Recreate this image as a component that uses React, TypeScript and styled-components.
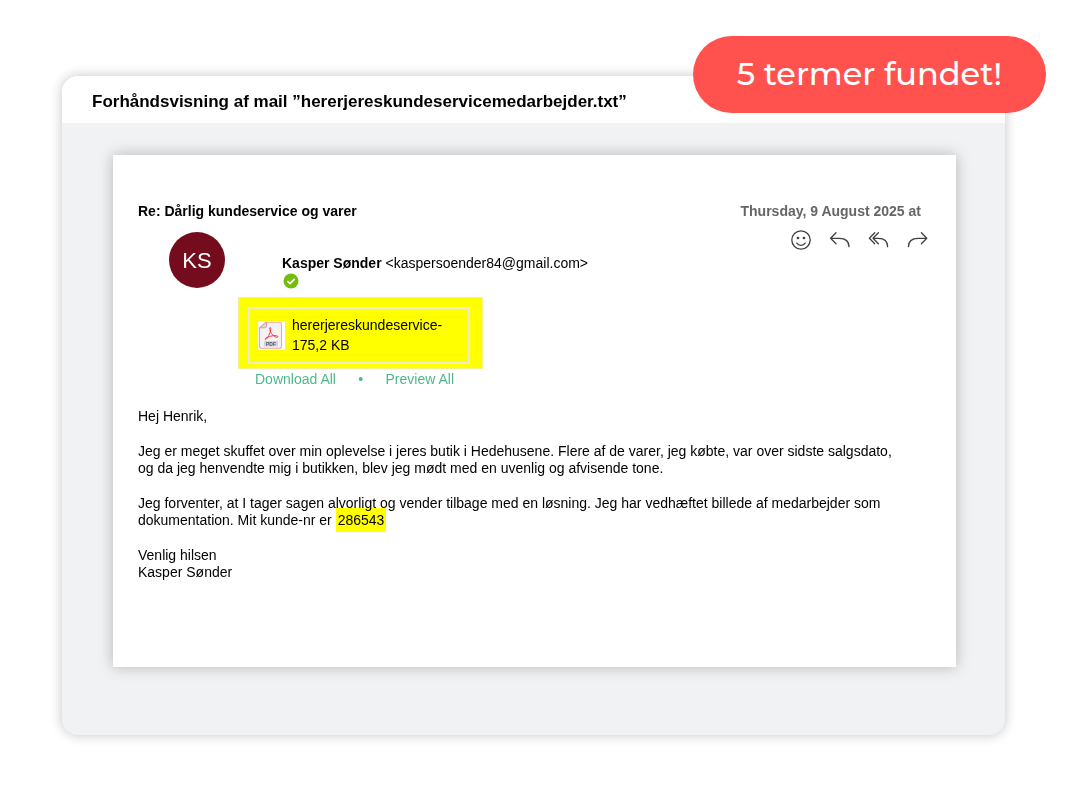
import React from "react";
import styled, { createGlobalStyle } from "styled-components";

const GlobalStyle = createGlobalStyle`
  *, *::before, *::after { box-sizing: border-box; }
  body {
    margin: 0;
    background: #ffffff;
    color: #000000;
    font-family: "Liberation Sans", Arial, sans-serif;
    font-size: 14px;
    line-height: 17px;
  }
`;

const Page = styled.main`
  position: relative;
  padding: 76px 62px 64px;
`;

const FoundBadge = styled.div`
  position: absolute;
  top: 36px;
  right: 21px;
  padding: 15px 44px 17px;
  border-radius: 40px;
  background: #ff524f;
  color: #ffffff;
  font-family: Montserrat, Inter, sans-serif;
  font-size: 32px;
  font-weight: 500;
  line-height: 45px;
  white-space: nowrap;
`;

const Panel = styled.section`
  border-radius: 16px;
  background: #f1f2f4;
  box-shadow: 0 0 12px 1px rgba(0, 0, 0, 0.2);
`;

const PanelTitle = styled.h1`
  margin: 0;
  padding: 16px 30px 11px;
  border-radius: 16px 16px 0 0;
  background: #ffffff;
  font-size: 17px;
  line-height: 20px;
`;

const PanelBody = styled.div`
  padding: 32px 49px 68px 51px;
`;

const Mail = styled.article`
  padding: 48px 28px 86px 25px;
  background: #ffffff;
  box-shadow: 0 0 14px rgba(0, 0, 0, 0.25);
`;

const MailHeader = styled.header`
  display: flex;
  justify-content: space-between;
`;

const Subject = styled.h2`
  margin: 0;
  font-size: 14px;
  line-height: 17px;
`;

const Sender = styled.div`
  display: flex;
  gap: 57px;
  padding: 12px 0 0 31px;
`;

const Avatar = styled.div`
  display: grid;
  place-items: center;
  width: 56px;
  height: 56px;
  border-radius: 50%;
  background: #750c1e;
  color: #ffffff;
  font-size: 22px;
`;

const SenderName = styled.div`
  padding-top: 23px;

  svg {
    display: block;
    margin: 1px 0 0 1px;
  }
`;

const Meta = styled.div`
  display: flex;
  flex-direction: column;
  align-items: flex-end;
  gap: 10px;
`;

const SentDate = styled.time`
  padding-right: 7px;
  color: #666666;
  font-weight: bold;
`;

const Actions = styled.div`
  display: flex;
  gap: 19px;
`;

const ActionButton = styled.button`
  width: 20px;
  height: 20px;
  padding: 0;
  border: 0;
  background: none;
  color: #404040;
  cursor: pointer;

  svg {
    display: block;
    overflow: visible;
  }
`;

const Attachments = styled.section`
  width: fit-content;
  margin: 8px 0 0 100px;
`;

const Highlight = styled.div`
  padding: 9px 12px 4px 9px;
  background: #ffff00;
  border: 1px solid #f4f08c;
`;

const Attachment = styled.div`
  display: flex;
  align-items: center;
  gap: 7px;
  min-width: 222px;
  padding: 6px 20px 7px 8px;
  border: 2px solid #ecebd0;
  line-height: 20px;
`;

const AttachmentLinks = styled.nav`
  display: flex;
  justify-content: space-between;
  padding: 2px 29px 0 17px;
  color: #4fb78e;
`;

const TextLink = styled.a`
  color: inherit;
  text-decoration: none;
`;

const Message = styled.div`
  display: grid;
  gap: 18px;
  padding-top: 20px;

  p { margin: 0; }
`;

/* Multiplied so that descenders from the line above stay readable. */
const Mark = styled.mark`
  padding: 4px 2px;
  background: #ffff00;
  color: inherit;
  mix-blend-mode: multiply;
`;

const VerifiedIcon = () => (
  <svg width="16" height="16" viewBox="0 0 16 16" aria-hidden="true">
    <circle cx="8" cy="8" r="7.5" fill="#72bd0c" />
    <path d="M4.4 8.2 7 10.6l4.7-4.7" fill="none" stroke="#fff" strokeWidth="1.8" />
  </svg>
);

const PdfIcon = () => (
  <svg width="27" height="29" viewBox="0 0 27 29" aria-hidden="true">
    <path d="M0 0h27v29H0z" fill="#fff" />
    <path
      d="M8 1.2h13.5a2 2 0 0 1 2 2v22a2 2 0 0 1-2 2h-18a2 2 0 0 1-2-2V7z"
      fill="#f3f3f6"
      stroke="#f7a3a3"
      strokeWidth="1.1"
    />
    <path d="M8.5 1v4a1.8 1.8 0 0 1-1.8 1.8H1.6z" fill="#ddd" stroke="#d08a8a" strokeWidth=".8" />
    <path
      d="M12.4 6.4c-1.3 0-.4 3.8 1.2 6.2 1.5 2.3 4.4 4.3 6 3.6 1.2-.7-1-2-4-1.6-3.8.5-8 2.3-8.6 3.4-.3.8.9.8 2.1-.7 2-2.6 4.5-9 3.3-10.9z"
      fill="none"
      stroke="#ee3b43"
      strokeWidth="1"
    />
    <rect x="6" y="20" width="14" height="5.6" rx="1" fill="#d0d3d7" />
    <text
      x="13"
      y="24.6"
      textAnchor="middle"
      fontFamily="Liberation Sans, sans-serif"
      fontSize="5"
      fontWeight="bold"
      fill="#555a60"
    >
      PDF
    </text>
  </svg>
);

const ActionIcon = ({ children }: { children: React.ReactNode }) => (
  <svg
    width="20"
    height="20"
    viewBox="0 0 20 20"
    fill="none"
    stroke="currentColor"
    strokeWidth="1.3"
    strokeLinecap="round"
    strokeLinejoin="round"
    aria-hidden="true"
  >
    {children}
  </svg>
);

const actions = [
  {
    label: "React",
    drawing: (
      <>
        <circle cx="10" cy="10" r="9.2" />
        <path d="M5.8 13.1c1.9 2.9 6.5 2.9 8.4 0" />
        <circle cx="7" cy="8" r=".7" fill="currentColor" />
        <circle cx="13" cy="8" r=".7" fill="currentColor" />
      </>
    ),
  },
  {
    label: "Reply",
    drawing: <path d="M6 2.7.6 8.3 6 13.7M.6 8.3h8.8c5.8 0 9.6 3 9.6 8.4" />,
  },
  {
    label: "Reply all",
    drawing: <path d="M5.7 2.7.4 8.3l5.3 5.4M9.4 2.7 4 8.3l5.4 5.4M4 8.3h5.3c5.6 0 9.3 3 9.3 8.4" />,
  },
  {
    label: "Forward",
    drawing: <path d="m13.4 2.7 5.4 5.6-5.4 5.4M18.8 8.3H10C4.2 8.3.4 11.3.4 16.7" />,
  },
];

export default function App() {
  return (
    <>
      <GlobalStyle />
      <Page>
        <Panel>
          <PanelTitle>Forhåndsvisning af mail ”hererjereskundeservicemedarbejder.txt”</PanelTitle>
          <PanelBody>
            <Mail>
              <MailHeader>
                <div>
                  <Subject>Re: Dårlig kundeservice og varer</Subject>
                  <Sender>
                    <Avatar>KS</Avatar>
                    <SenderName>
                      <strong>Kasper Sønder</strong> &lt;kaspersoender84@gmail.com&gt;
                      <VerifiedIcon />
                    </SenderName>
                  </Sender>
                </div>
                <Meta>
                  <SentDate dateTime="2025-08-09">Thursday, 9 August 2025 at</SentDate>
                  <Actions>
                    {actions.map(({ label, drawing }) => (
                      <ActionButton key={label} type="button" aria-label={label}>
                        <ActionIcon>{drawing}</ActionIcon>
                      </ActionButton>
                    ))}
                  </Actions>
                </Meta>
              </MailHeader>
              <Attachments>
                <Highlight>
                  <Attachment>
                    <PdfIcon />
                    <div>
                      hererjereskundeservice-
                      <br />
                      175,2 KB
                    </div>
                  </Attachment>
                </Highlight>
                <AttachmentLinks>
                  <TextLink href="#download">Download All</TextLink>
                  <span>•</span>
                  <TextLink href="#preview">Preview All</TextLink>
                </AttachmentLinks>
              </Attachments>
              <Message>
                <p>Hej Henrik,</p>
                <p>
                  Jeg er meget skuffet over min oplevelse i jeres butik i Hedehusene. Flere af de varer, jeg købte, var
                  over sidste salgsdato,
                  <br />
                  og da jeg henvendte mig i butikken, blev jeg mødt med en uvenlig og afvisende tone.
                </p>
                <p>
                  Jeg forventer, at I tager sagen alvorligt og vender tilbage med en løsning. Jeg har vedhæftet billede
                  af medarbejder som
                  <br />
                  dokumentation. Mit kunde-nr er <Mark>286543</Mark>
                </p>
                <p>
                  Venlig hilsen
                  <br />
                  Kasper Sønder
                </p>
              </Message>
            </Mail>
          </PanelBody>
        </Panel>
        <FoundBadge role="status">5 termer fundet!</FoundBadge>
      </Page>
    </>
  );
}
